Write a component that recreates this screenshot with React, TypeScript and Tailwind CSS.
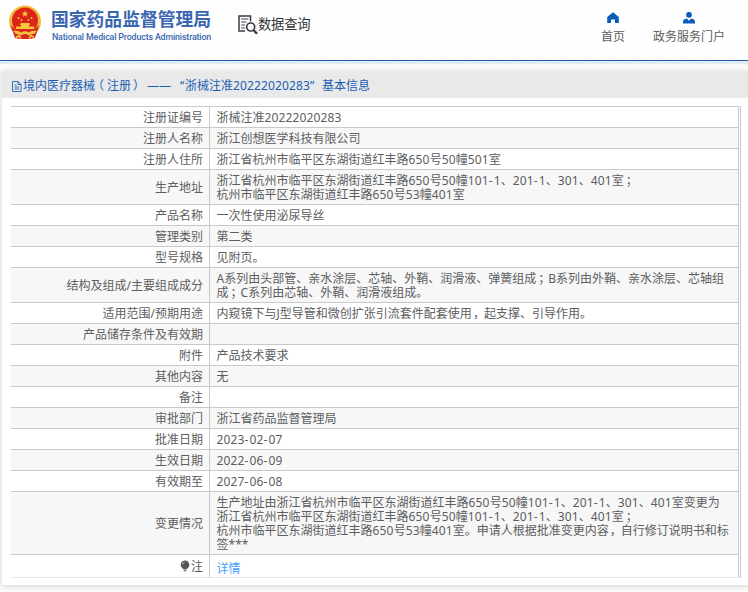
import { ReactNode } from "react";

interface Row {
    label: ReactNode;
    lines: string[];
    link?: boolean;
}

const rows: Row[] = [
    { label: "注册证编号", lines: ["浙械注准20222020283"] },
    { label: "注册人名称", lines: ["浙江创想医学科技有限公司"] },
    { label: "注册人住所", lines: ["浙江省杭州市临平区东湖街道红丰路650号50幢501室"] },
    {
        label: "生产地址",
        lines: [
            "浙江省杭州市临平区东湖街道红丰路650号50幢101-1、201-1、301、401室；",
            "杭州市临平区东湖街道红丰路650号53幢401室",
        ],
    },
    { label: "产品名称", lines: ["一次性使用泌尿导丝"] },
    { label: "管理类别", lines: ["第二类"] },
    { label: "型号规格", lines: ["见附页。"] },
    {
        label: "结构及组成/主要组成成分",
        lines: [
            "A系列由头部管、亲水涂层、芯轴、外鞘、润滑液、弹簧组成；B系列由外鞘、亲水涂层、芯轴组",
            "成；C系列由芯轴、外鞘、润滑液组成。",
        ],
    },
    { label: "适用范围/预期用途", lines: ["内窥镜下与J型导管和微创扩张引流套件配套使用，起支撑、引导作用。"] },
    { label: "产品储存条件及有效期", lines: [""] },
    { label: "附件", lines: ["产品技术要求"] },
    { label: "其他内容", lines: ["无"] },
    { label: "备注", lines: [""] },
    { label: "审批部门", lines: ["浙江省药品监督管理局"] },
    { label: "批准日期", lines: ["2023-02-07"] },
    { label: "生效日期", lines: ["2022-06-09"] },
    { label: "有效期至", lines: ["2027-06-08"] },
    {
        label: "变更情况",
        lines: [
            "生产地址由浙江省杭州市临平区东湖街道红丰路650号50幢101-1、201-1、301、401室变更为",
            "浙江省杭州市临平区东湖街道红丰路650号50幢101-1、201-1、301、401室；",
            "杭州市临平区东湖街道红丰路650号53幢401室。申请人根据批准变更内容，自行修订说明书和标",
            "签***",
        ],
    },
    { label: <><Bulb />注</>, lines: ["详情"], link: true },
];

// Keeps digits on a 7px pitch and centres full-width punctuation in its cell
function Txt({ children }: { children: string }) {
    return (
        <>
            {children.split(/([0-9]+|-|[；，（）])/).map((part, i) => {
                if (/^[0-9]/.test(part)) return <span key={i} className="tracking-[0.136px]">{part}</span>;
                if (part === "-") return <span key={i} className="tracking-[1.1px]">-</span>;
                if (part === "（") return <span key={i} className="inline-block w-3 -indent-[3px]">{part}</span>;
                if (part === "，") return <span key={i} className="inline-block w-3 indent-px">{part}</span>;
                if (/^[；）]/.test(part)) return <span key={i} className="inline-block w-3 indent-[2px]">{part}</span>;
                return part;
            })}
        </>
    );
}

function Bulb() {
    return (
        <svg className="inline-block mr-px align-[-1px]" width="10" height="12" viewBox="0 0 10 12">
            <path d="M5 .5a4.3 4.3 0 0 0-2.6 7.7L3.8 9.5h2.4l1.4-1.3A4.3 4.3 0 0 0 5 .5Z" fill="#555" />
            <path d="M3.7 10.7h2.6" stroke="#555" />
            <path d="M2.4 4.6A2.4 2.4 0 0 1 4.6 2.4" stroke="#ccc" strokeWidth=".8" fill="none" />
        </svg>
    );
}

function Emblem() {
    return (
        <svg width="34" height="36" viewBox="0 0 34 36">
            <circle cx="17" cy="16.5" r="16" fill="#f0b93c" />
            <path d="M3 20c1 6 3 9 4 13l5 1h10l5-1c1-4 3-7 4-13l-5 5H8Z" fill="#d8261c" />
            <circle cx="17" cy="15.5" r="13" fill="#dc2418" />
            <path d="M17 5.2l.9 2.5h2.7l-2.2 1.6.8 2.6-2.2-1.6-2.2 1.6.8-2.6-2.2-1.6h2.7Z" fill="#f9c63d" />
            <g fill="#f9c63d">
                <circle cx="10.5" cy="13" r="1.1" />
                <circle cx="13.5" cy="15" r=".9" />
                <circle cx="20.5" cy="15" r=".9" />
                <circle cx="23.5" cy="13" r="1.1" />
                <path d="M13 18h8l1.5 1.8H21V21.5H26v2.5H8v-2.5h5v-1.7h-1.5Z" />
            </g>
            <path d="M5 26q6-1 8 1.500 4-2.500 8 0 2-2.500 8-1.500l-3 3q-3-.5-5 1.500-4-3-8 0-2-2-5-1.500Z" fill="#f4c044" />
            <path d="M8 32.500l3-2 2 3M26 32.500l-3-2-2 3" stroke="#f4c044" strokeWidth="1.6" fill="none" />
        </svg>
    );
}

function QueryIcon() {
    return (
        <svg width="20" height="20" viewBox="0 0 20 20" fill="none" stroke="#3b3b4b">
            <path d="M7 16H1V1h11.5v5.5" strokeWidth="1.5" />
            <path d="M3.3 4h7M3.3 7h5M3.3 10h3.5M3.3 13h3.5" strokeWidth="1.1" />
            <circle cx="12.7" cy="12" r="4" strokeWidth="1.7" />
            <path d="M15.5 15l3.5 3.8" strokeWidth="2.4" />
        </svg>
    );
}

function Header() {
    return (
        <header className="flex h-[60px] items-start bg-[#fefefe]">
            <div className="ml-2 mt-[5px]">
                <Emblem />
            </div>
            <div className="ml-[9px] mt-[8px] w-[162px] whitespace-nowrap text-[#3a66b0]">
                <div className="text-[17.8px] leading-[22px] font-bold">国家药品监督管理局</div>
                <div className="pl-px font-['Roboto'] text-[8.8px] leading-[14px] font-medium tracking-[-0.13px]">
                    National Medical Products Administration
                </div>
            </div>
            <div className="ml-[25px] mt-[15px] flex">
                <QueryIcon />
                <span className="-mt-[2px] text-[13.3px] leading-[22px] tracking-[-0.2px] text-[#333]">数据查询</span>
            </div>
            <nav className="ml-auto mr-[23px] mt-[12px] flex gap-[28px] text-[12px] leading-[16px] text-[#606060]">
                <div className="flex flex-col items-center gap-[5px]">
                    <svg width="12" height="12" viewBox="0 0 12 12" fill="#0b5cb8">
                        <path d="M6 .2 11.8 5V11H8V7.5H4V11H.2V5Z" />
                    </svg>
                    <span>首页</span>
                </div>
                <div className="flex flex-col items-center gap-[5px]">
                    <svg width="12" height="12" viewBox="0 0 12 12" fill="#0b5cb8">
                        <circle cx="6" cy="2.8" r="2.9" />
                        <path d="M0 11.5V9.8Q0 7 4 6.5L6 8.8 8 6.5Q12 7 12 9.8V11.5Z" />
                    </svg>
                    <span>政务服务门户</span>
                </div>
            </nav>
        </header>
    );
}

function Title() {
    return (
        <h1 className="flex h-[27px] items-center bg-[#e9e9e9] pl-[10px] pt-[3px] text-[12px] leading-[16px] whitespace-pre text-[#1a5fb4]">
            <svg className="mr-px" width="10" height="11" viewBox="0 0 10 11" fill="none" stroke="#1a5fb4" strokeWidth=".9">
                <path d="M.5.5h5.5l3 3v7H.5ZM6 .5v3h3M2.5 4h2M2.5 6h4.5M2.5 8h4.5" />
            </svg>
            <span className="w-[124px]"><Txt>境内医疗器械（注册）</Txt></span>
            <span className="w-[33px]">——</span>
            <span className="w-[5px] font-['Noto_Sans']">“</span>
            <span><Txt>浙械注准20222020283</Txt></span>
            <span className="w-[12px] font-['Noto_Sans']">”</span>
            <span>基本信息</span>
        </h1>
    );
}

export default function App() {
    return (
        <div className="h-[592px] w-[748px] overflow-hidden bg-[#fafafa] font-['Noto_Sans','Noto_Sans_CJK_SC',sans-serif]">
            <Header />
            <div className="h-px bg-[#2558a0]" />
            <div className="mb-[7px] h-[3px] bg-[repeating-linear-gradient(135deg,#d3e6f8_0px,#d3e6f8_1px,#fdfdfd_1.4px,#fdfdfd_2.121px)]" />
            <main className="ml-[2px] h-[514px] bg-white shadow-[0_1px_5px_rgba(0,0,0,0.16)]">
                <Title />
                <div className="ml-[9px] mt-2 w-[730px] border-r border-b border-b-[#e5e5e8] border-r-[#c9c9cd] pr-px">
                    {rows.map((row, i) => (
                        <div
                            key={i}
                            className={`flex border-t border-r border-[#c9c9cd] text-[12px] leading-[14px] whitespace-nowrap text-[#5c5d61] ${i % 2 ? "bg-[#f7f7f7]" : "bg-white"}`}
                        >
                            <div className="flex w-[199px] shrink-0 items-center justify-end border-r border-[#c9c9cd] pr-[6px] pt-[2px]">
                                <span>{row.label}</span>
                            </div>
                            <div className={`pl-[6.6px] ${row.link ? "pt-[7px] pb-px text-[#409eff]" : "pt-[4px] pb-[2px]"}`}>
                                {row.lines.map((line, j) => (
                                    <div key={j} className="h-[14px]"><Txt>{line}</Txt></div>
                                ))}
                            </div>
                        </div>
                    ))}
                </div>
            </main>
        </div>
    );
}
